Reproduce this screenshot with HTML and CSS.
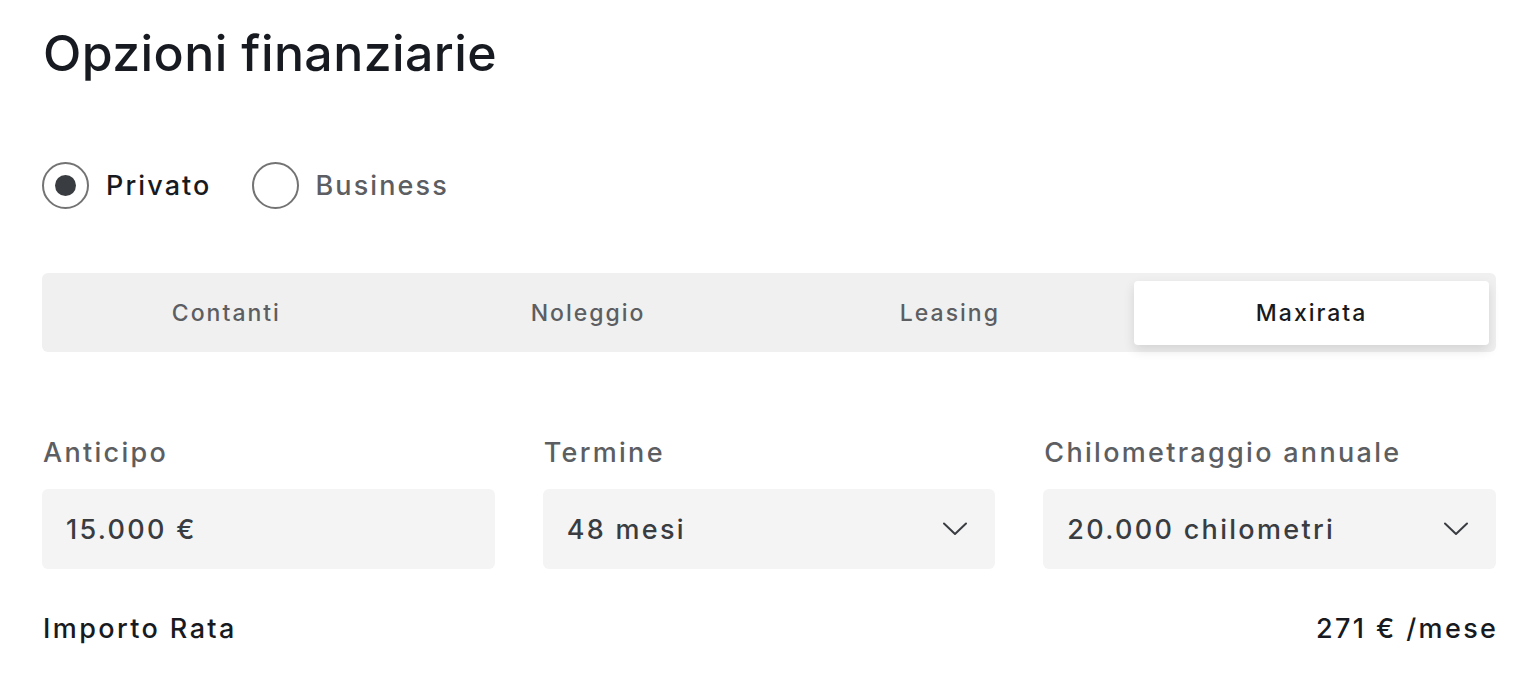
FILE: index.html
```html
<!DOCTYPE html>
<html lang="it">
<head>
<meta charset="utf-8">
<title>Opzioni finanziarie</title>
<link rel="stylesheet" href="styles.css">
</head>
<body>
<main class="page">
  <h1 class="title">Opzioni finanziarie</h1>

  <div class="radios">
    <label class="radio radio--checked">
      <span class="radio__circle"><span class="radio__dot"></span></span>
      <span class="radio__label">Privato</span>
    </label>
    <label class="radio">
      <span class="radio__circle"></span>
      <span class="radio__label">Business</span>
    </label>
  </div>

  <div class="tabs">
    <div class="tab">Contanti</div>
    <div class="tab">Noleggio</div>
    <div class="tab">Leasing</div>
    <div class="tab tab--active">Maxirata</div>
  </div>

  <div class="fields">
    <div class="field">
      <div class="field__label">Anticipo</div>
      <div class="field__box">15.000 €</div>
    </div>
    <div class="field">
      <div class="field__label">Termine</div>
      <div class="field__box field__box--select">
        <span>48 mesi</span>
        <svg class="chevron" viewBox="0 0 24 14" width="24" height="14"><path d="M1 1.5 L12 12 L23 1.5" fill="none" stroke="#393c41" stroke-width="2" stroke-linecap="round" stroke-linejoin="round"/></svg>
      </div>
    </div>
    <div class="field">
      <div class="field__label">Chilometraggio annuale</div>
      <div class="field__box field__box--select">
        <span>20.000 chilometri</span>
        <svg class="chevron" viewBox="0 0 24 14" width="24" height="14"><path d="M1 1.5 L12 12 L23 1.5" fill="none" stroke="#393c41" stroke-width="2" stroke-linecap="round" stroke-linejoin="round"/></svg>
      </div>
    </div>
  </div>

  <div class="total">
    <span>Importo Rata</span>
    <span class="total__value">271 € /mese</span>
  </div>
</main>
</body>
</html>
```

FILE: styles.css
```css
* { box-sizing: border-box; }

body {
  margin: 0;
  background: #ffffff;
  font-family: "Inter", "Liberation Sans", sans-serif;
  color: #171a20;
}

.page {
  padding: 25px 30px 0 42px;
}

.title {
  margin: 0;
  font-size: 50px;
  line-height: 56px;
  font-weight: 500;
  letter-spacing: 0.4px;
  color: #171a20;
  padding-left: 1px;
}

.radios {
  display: flex;
  align-items: center;
  gap: 40px;
  margin-top: 80px;
  height: 48px;
}

.radio {
  display: flex;
  align-items: center;
  gap: 17px;
}

.radio__circle {
  width: 47px;
  height: 47px;
  border-radius: 50%;
  border: 2px solid #737373;
  display: flex;
  align-items: center;
  justify-content: center;
}

.radio__dot {
  width: 21px;
  height: 21px;
  border-radius: 50%;
  background: #393c41;
}

.radio__label {
  font-size: 27px;
  font-weight: 500;
  letter-spacing: 2.1px;
  color: #5c5e62;
}

.radio--checked .radio__label {
  color: #171a20;
}

.tabs {
  margin-top: 64px;
  display: grid;
  grid-template-columns: repeat(4, 1fr);
  gap: 7px;
  padding: 8px 7px 7px 7px;
  background: #f0f0f0;
  border-radius: 6px;
}

.tab {
  height: 64px;
  display: flex;
  align-items: center;
  justify-content: center;
  font-size: 23px;
  font-weight: 500;
  letter-spacing: 2px;
  color: #5c5e62;
  border-radius: 4px;
}

.tab--active {
  background: #ffffff;
  color: #171a20;
  box-shadow: 0 5px 12px rgba(0, 0, 0, 0.12);
}

.fields {
  margin-top: 85px;
  display: grid;
  grid-template-columns: repeat(3, 1fr);
  gap: 48px;
}

.field__label {
  font-size: 27px;
  line-height: 32px;
  font-weight: 500;
  letter-spacing: 2.3px;
  color: #5c5e62;
  padding-left: 1px;
}

.field__box {
  margin-top: 20px;
  height: 80px;
  background: #f4f4f4;
  border-radius: 6px;
  padding: 0 28px 0 24px;
  display: flex;
  align-items: center;
  justify-content: space-between;
  font-size: 27px;
  font-weight: 500;
  letter-spacing: 2.3px;
  color: #393c41;
}

.chevron {
  display: block;
}

.total {
  margin-top: 44px;
  display: flex;
  justify-content: space-between;
  font-size: 27px;
  line-height: 32px;
  font-weight: 500;
  letter-spacing: 2.4px;
  color: #171a20;
  padding-left: 1px;
}

.total__value {
  margin-right: -2.4px;
}
```
